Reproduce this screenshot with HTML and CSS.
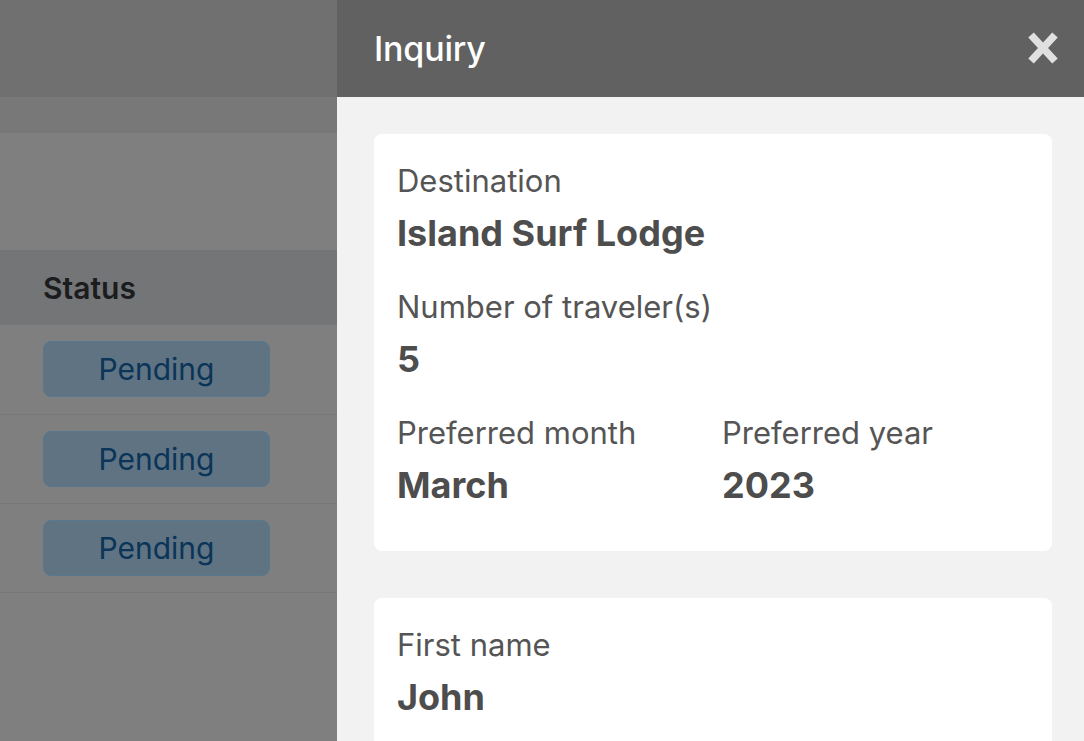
FILE: index.html
```html
<!DOCTYPE html>
<html lang="en">
<head>
<meta charset="utf-8">
<title>Inquiry</title>
<link rel="stylesheet" href="styles.css">
</head>
<body>
<div class="page">
  <div class="backdrop">
    <div class="bd-topbar"></div>
    <div class="bd-subbar"></div>
    <div class="bd-spacer"></div>
    <table class="bd-table">
      <thead>
        <tr><th>Status</th></tr>
      </thead>
      <tbody>
        <tr><td><span class="badge">Pending</span></td></tr>
        <tr><td><span class="badge">Pending</span></td></tr>
        <tr><td><span class="badge">Pending</span></td></tr>
      </tbody>
    </table>
  </div>
  <aside class="drawer">
    <header class="drawer-header">
      <h1 class="drawer-title">Inquiry</h1>
      <button class="close-btn" aria-label="Close">
        <svg width="32" height="34" viewBox="0 0 32 34">
          <path d="M4 4 L28 30 M28 4 L4 30" stroke="#e0e0e0" stroke-width="7.5" stroke-linecap="butt"/>
        </svg>
      </button>
    </header>
    <div class="drawer-body">
      <section class="card">
        <div class="field">
          <div class="label">Destination</div>
          <div class="value">Island Surf Lodge</div>
        </div>
        <div class="field">
          <div class="label">Number of traveler(s)</div>
          <div class="value">5</div>
        </div>
        <div class="field-row">
          <div class="field">
            <div class="label">Preferred month</div>
            <div class="value">March</div>
          </div>
          <div class="field">
            <div class="label">Preferred year</div>
            <div class="value">2023</div>
          </div>
        </div>
      </section>
      <section class="card card-tall">
        <div class="field">
          <div class="label">First name</div>
          <div class="value">John</div>
        </div>
      </section>
    </div>
  </aside>
</div>
</body>
</html>
```
FILE: styles.css
```css
* { box-sizing: border-box; }
html, body {
  margin: 0;
  padding: 0;
  height: 100%;
  overflow: hidden;
}
body {
  font-family: Inter, "Noto Sans", "Liberation Sans", sans-serif;
  background: #7f7f7f;
}
.page {
  display: flex;
  height: 741px;
  overflow: hidden;
}
.backdrop {
  width: 337px;
  flex: none;
  background: #7f7f7f;
}
.bd-topbar {
  height: 97px;
  background: #707070;
}
.bd-subbar {
  height: 36px;
  background: #787878;
}
.bd-spacer {
  height: 117px;
}
.bd-table {
  width: 100%;
  border-collapse: collapse;
}
.bd-table th {
  height: 75px;
  background: #747577;
  text-align: left;
  padding: 0 0 0 43px;
  font-size: 30px;
  font-weight: 600;
  color: #1b1c1e;
}
.bd-table td {
  height: 89px;
  padding: 0 0 0 43px;
  border-bottom: 1px solid #777777;
  vertical-align: middle;
}
.badge {
  display: inline-flex;
  align-items: center;
  justify-content: center;
  width: 227px;
  height: 56px;
  border-radius: 8px;
  background: #5f7383;
  border: 1.5px solid #58788f;
  color: #0b3558;
  font-size: 30px;
  font-weight: 400;
}
.drawer {
  flex: 1;
  display: flex;
  flex-direction: column;
  background: #f2f2f2;
  min-width: 0;
}
.drawer-header {
  height: 97px;
  flex: none;
  background: #616161;
  display: flex;
  align-items: center;
  justify-content: space-between;
  padding: 0 25px 0 37px;
}
.drawer-title {
  margin: 0;
  font-size: 34px;
  font-weight: 500;
  color: #ffffff;
  letter-spacing: -0.2px;
}
.close-btn {
  background: none;
  border: 0;
  padding: 0;
  width: 32px;
  height: 34px;
  display: flex;
  margin-top: -2px;
}
.drawer-body {
  padding: 37px 32px 0 37px;
  display: flex;
  flex-direction: column;
  gap: 47px;
}
.card {
  background: #ffffff;
  border-radius: 8px;
  padding: 29px 23px 44px;
  display: flex;
  flex-direction: column;
  gap: 34px;
}
.card-tall {
  min-height: 200px;
}
.field-row {
  display: grid;
  grid-template-columns: 325px 1fr;
}
.label {
  font-size: 31px;
  line-height: 36px;
  color: #555555;
}
.value {
  margin-top: 12px;
  font-size: 36px;
  line-height: 44px;
  font-weight: 700;
  color: #4d4d4d;
}
```
